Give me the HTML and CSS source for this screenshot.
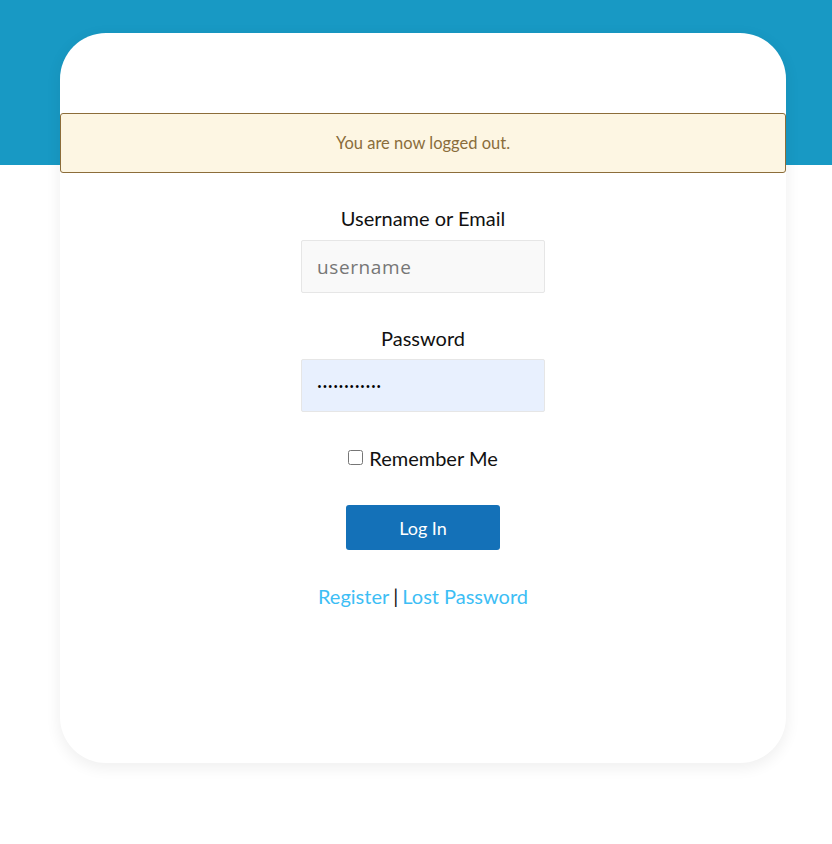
FILE: index.html
```html
<!DOCTYPE html>
<html lang="en">
<head>
    <meta charset="UTF-8">
    <meta name="viewport" content="width=device-width, initial-scale=1.0">
    <title>Log In</title>
    <link rel="stylesheet" href="styles.css">
</head>
<body>
    <div class="page">
        <div class="card">
            <div class="notice">You are now logged out.</div>
            <form class="login">
                <label class="field-label user-label" for="user">Username or Email</label>
                <input type="text" id="user" class="field" placeholder="username">

                <label class="field-label" for="pass">Password</label>
                <input type="password" id="pass" class="field filled" value="secretpass12">

                <label class="remember">
                    <input type="checkbox"> Remember Me
                </label>

                <button type="button" class="btn">Log In</button>

                <div class="links">
                    <a href="#">Register</a><span class="sep">|</span><a href="#">Lost Password</a>
                </div>
            </form>
        </div>
    </div>
</body>
</html>
```

FILE: styles.css
```css
*{
    margin: 0;
    padding: 0;
    box-sizing: border-box;
}
body{
    font-family: "Lato", "Liberation Sans", sans-serif;
    color: #111;
    min-height: 844px;
    background: linear-gradient(#1899c4, #1899c4) top left / 100% 165px no-repeat, #fff;
}
.page{
    padding: 33px 46px 60px 60px;
}
.card{
    width: 726px;
    height: 730px;
    background-color: #fff;
    border-radius: 46px;
    box-shadow: 0 4px 14px 2px rgba(0, 0, 0, 0.06);
    padding-top: 80px;
}
.notice{
    height: 60px;
    background-color: #fdf6e3;
    border: 1px solid #8c6d3a;
    border-radius: 3px;
    color: #8a6d3b;
    font-size: 16.5px;
    display: flex;
    align-items: center;
    justify-content: center;
}
.login{
    display: flex;
    flex-direction: column;
    align-items: center;
    padding-top: 32px;
}
.field-label{
    font-size: 20px;
    line-height: 26px;
    margin-bottom: 8px;
}
.user-label{
    margin-bottom: 9px;
}
.field{
    width: 244px;
    height: 53px;
    border: 1px solid #e6e6e6;
    border-radius: 2px;
    background-color: #f9f9f9;
    padding-left: 15px;
    font-family: "Open Sans", sans-serif;
    font-size: 19px;
    letter-spacing: 0.6px;
    color: #333;
    outline: none;
    margin-bottom: 32px;
}
.field::placeholder{
    color: #767676;
}
.field.filled{
    background-color: #e8f0fe;
    color: #000;
    font-size: 13px;
    letter-spacing: 0.5px;
    margin-bottom: 34px;
}
.remember{
    font-size: 20px;
    display: flex;
    align-items: center;
    gap: 6px;
}
.remember input{
    width: 15px;
    height: 15px;
    margin-top: -2px;
}
.btn{
    margin-top: 35px;
    width: 154px;
    height: 45px;
    border: none;
    border-radius: 3px;
    background-color: #1471b8;
    color: #fff;
    font-family: "Lato", sans-serif;
    font-size: 18px;
    cursor: pointer;
}
.links{
    margin-top: 34px;
    font-size: 20px;
}
.links a{
    color: #3dbef5;
    text-decoration: none;
}
.sep{
    margin: 0 4px;
}
```
